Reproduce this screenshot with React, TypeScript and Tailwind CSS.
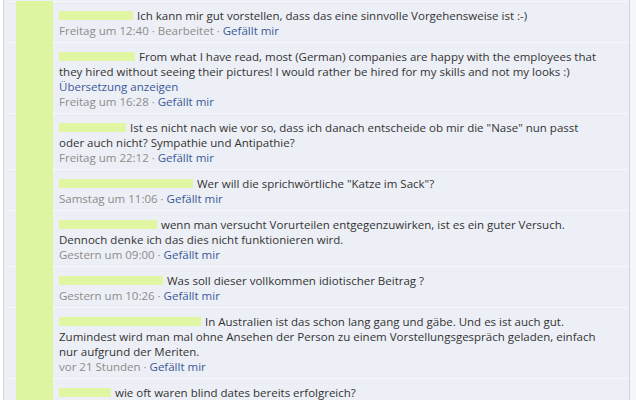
import React from 'react';

type Comment = {
  name: number;
  lines: string[];
  meta: string;
  translate?: boolean;
};

const comments: Comment[] = [
  { name: 74, lines: ['Ich kann mir gut vorstellen, dass das eine sinnvolle Vorgehensweise ist :-)'], meta: 'Freitag um 12:40 · Bearbeitet · ' },
  {
    name: 76,
    lines: [
      'From what I have read, most (German) companies are happy with the employees that',
      'they hired without seeing their pictures! I would rather be hired for my skills and not my looks :)',
    ],
    meta: 'Freitag um 16:28 · ',
    translate: true,
  },
  {
    name: 67,
    lines: ['Ist es nicht nach wie vor so, dass ich danach entscheide ob mir die "Nase" nun passt', 'oder auch nicht? Sympathie und Antipathie?'],
    meta: 'Freitag um 22:12 · ',
  },
  { name: 134, lines: ['Wer will die sprichwörtliche "Katze im Sack"?'], meta: 'Samstag um 11:06 · ' },
  {
    name: 98,
    lines: ['wenn man versucht Vorurteilen entgegenzuwirken, ist es ein guter Versuch.', 'Dennoch denke ich das dies nicht funktionieren wird.'],
    meta: 'Gestern um 09:00 · ',
  },
  { name: 104, lines: ['Was soll dieser vollkommen idiotischer Beitrag ?'], meta: 'Gestern um 10:26 · ' },
  {
    name: 142,
    lines: [
      'In Australien ist das schon lang gang und gäbe. Und es ist auch gut.',
      'Zumindest wird man mal ohne Ansehen der Person zu einem Vorstellungsgespräch geladen, einfach',
      'nur aufgrund der Meriten.',
    ],
    meta: 'vor 21 Stunden · ',
  },
  { name: 52, lines: ['wie oft waren blind dates bereits erfolgreich?'], meta: '' },
];

function Row({ c }: { c: Comment }) {
  return (
    <div className="flex">
      <div className="w-[4px]" />
      <div className="w-[8px] border-t border-[#f7f8fb]" />
      <div className="w-[37px] bg-[#def59f]" />
      <div className="flex-1 border-t border-[#f7f8fb] pt-[6px] pb-[4px] pl-[6px] pr-[20px]">
        {c.lines.map((l, i) => (
          <div key={i} className="whitespace-nowrap text-[#333333]">
            {i === 0 && (
              <span className="inline-block h-[9px] bg-[#e0f6a2] mr-[4px]" style={{ width: c.name }} />
            )}
            {l}
          </div>
        ))}
        {c.translate && <div className="text-[#3b5998]">Übersetzung anzeigen</div>}
        {c.meta && (
          <div className="text-[#8c8c8c]">
            {c.meta}
            <span className="text-[#3b5998]">Gefällt mir</span>
          </div>
        )}
      </div>
    </div>
  );
}

export default function App() {
  return (
    <div
      className="flex w-[636px] h-[400px] overflow-hidden bg-white text-[11.5px] leading-[15px]"
      style={{ fontFamily: '"Open Sans", "DejaVu Sans", sans-serif' }}
    >
      <div className="w-[3px] bg-white" />
      <div className="w-[627px] pt-px bg-[#eceff5] border-l border-r border-[#cfd4df]">
        {comments.map((c, i) => (
          <Row key={i} c={c} />
        ))}
      </div>
      <div className="flex-1 bg-[#f5f6f9]" />
    </div>
  );
}
